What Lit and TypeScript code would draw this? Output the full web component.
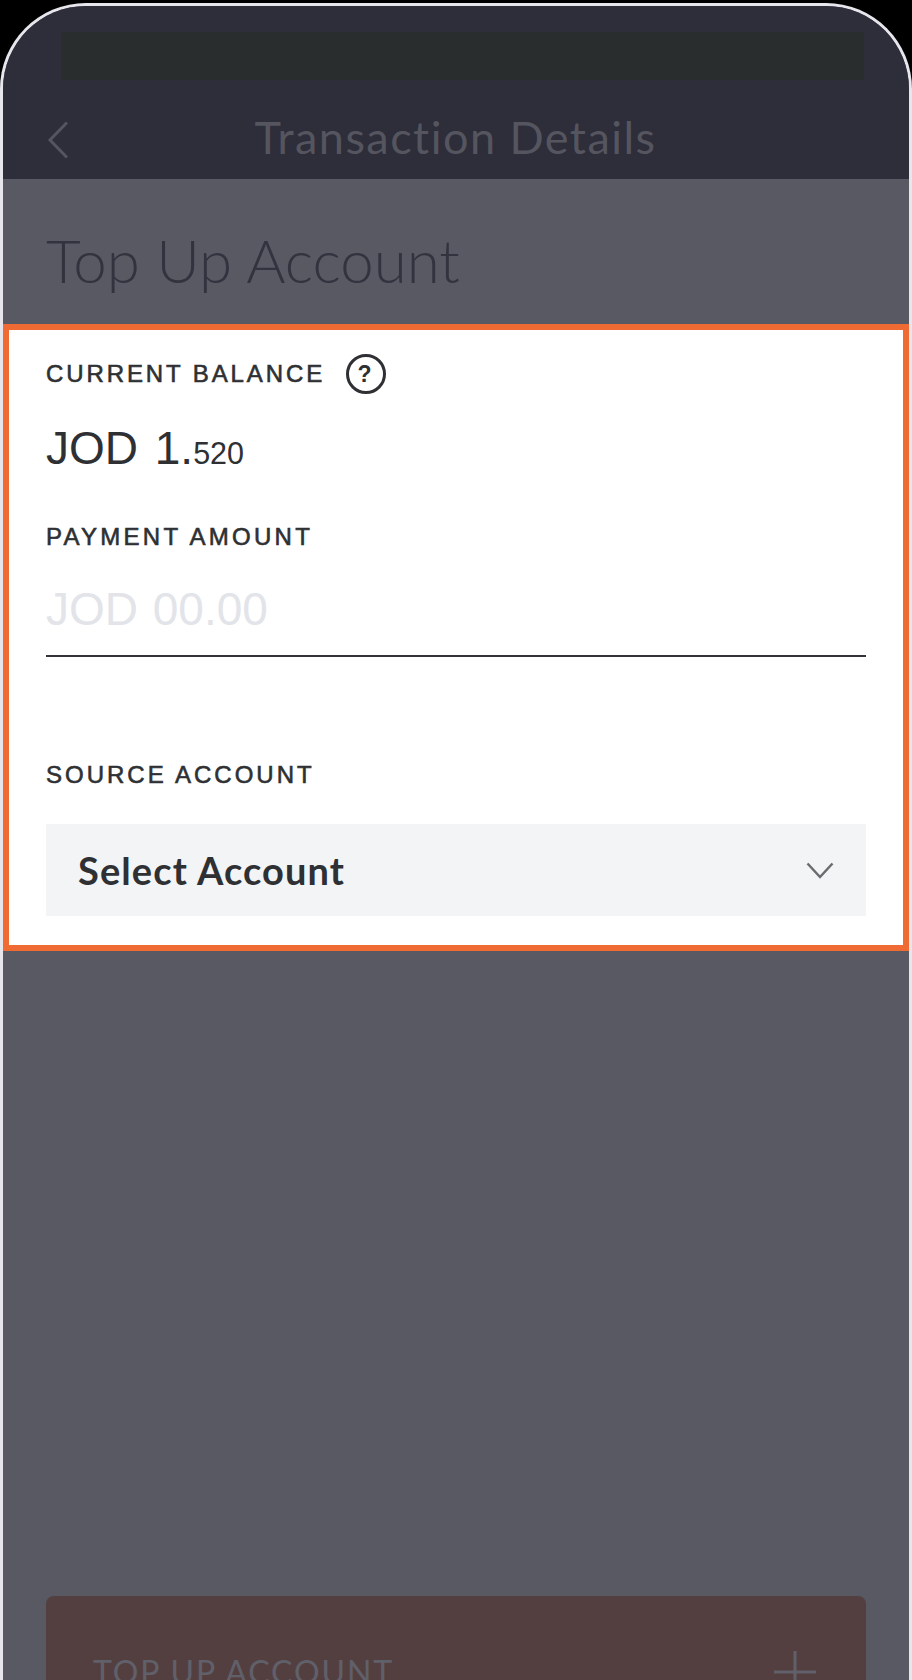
import { css, html, LitElement } from "lit";
import { customElement } from "lit/decorators.js";

@customElement("app-root")
export class AppRoot extends LitElement {
  static styles = css`
    :host {
      display: block;
      width: 912px;
      height: 1680px;
      overflow: hidden;
      background: #000;
      font-family: "Liberation Sans", Arial, sans-serif;
    }

    .phone {
      box-sizing: border-box;
      height: 1677px;
      margin-top: 3px;
      border: 3px solid #e6e6ec;
      border-bottom: 0;
      border-radius: 86px 86px 0 0;
      overflow: hidden;
      background: #595964;
    }

    .top {
      box-sizing: border-box;
      height: 173px;
      padding: 26px 45px 0 58px;
      background: #2e2d3a;
    }

    .status {
      height: 48px;
      background: #2a2d2e;
    }

    .nav {
      display: grid;
      grid-template-columns: 22px 1fr 22px;
      align-items: start;
      margin: 37px 0 0 -14px;
    }

    .nav svg {
      display: block;
      margin-top: 4px;
    }

    .nav h2 {
      margin: 0;
      text-align: center;
      font: 400 45px/40px "Lato", sans-serif;
      letter-spacing: 1.45px;
      color: #55555f;
    }

    .heading {
      margin: 0;
      height: 145px;
      box-sizing: border-box;
      padding: 45px 0 0 43px;
      font: 300 60px/72px "Lato", sans-serif;
      color: #33333f;
    }

    .panel {
      box-sizing: border-box;
      height: 627px;
      padding: 24px 37px 0 37px;
      border: 6px solid #ef6b33;
      background: #fff;
      color: #2e3033;
    }

    .label {
      display: flex;
      align-items: center;
      gap: 21px;
      height: 40px;
      font-size: 24px;
      letter-spacing: 2.9px;
      -webkit-text-stroke: 0.6px currentColor;
    }

    .label svg {
      -webkit-text-stroke: 0;
    }

    .balance {
      margin-top: 24px;
      height: 60px;
      font-size: 46px;
      line-height: 60px;
      word-spacing: 4px;
    }

    .balance small {
      font-size: 30.5px;
    }

    .amount-label {
      margin-top: 39px;
      letter-spacing: 3.27px;
    }

    .amount {
      height: 80px;
      margin-top: 18px;
      border-bottom: 2px solid #333438;
      font-size: 46px;
      line-height: 68px;
      word-spacing: 2px;
      color: #e2e4e9;
    }

    .source-label {
      margin-top: 98px;
      letter-spacing: 3px;
    }

    .select {
      display: flex;
      align-items: center;
      justify-content: space-between;
      height: 92px;
      margin-top: 29px;
      padding: 0 32px;
      background: #f3f4f6;
      font: 700 38px/44px "Lato", sans-serif;
      letter-spacing: 1.1px;
    }

    .cta {
      box-sizing: border-box;
      display: flex;
      align-items: center;
      justify-content: space-between;
      height: 160px;
      margin: 645px 43px 0;
      padding: 0 50px 8px 47px;
      border-radius: 8px;
      background: #543f40;
      color: #60606a;
      font: 400 32px/40px "Lato", sans-serif;
      letter-spacing: 1.9px;
    }
  `;

  render() {
    return html`<div class="phone">
      <div class="top">
        <div class="status"></div>
        <div class="nav">
          <svg width="22" height="38" viewBox="0 0 22 38" fill="none" stroke="#55555f" stroke-width="3">
            <path d="M20 1.5 3 19l17 17.5" />
          </svg>
          <h2>Transaction Details</h2>
          <span></span>
        </div>
      </div>
      <h1 class="heading">Top Up Account</h1>
      <section class="panel">
        <div class="label">
          CURRENT BALANCE
          <svg width="40" height="40" viewBox="0 0 40 40">
            <circle cx="20" cy="20" r="18.5" fill="none" stroke="#2e3033" stroke-width="3" />
            <text x="20" y="28" text-anchor="middle" font-size="23" font-weight="700" fill="#2e3033">?</text>
          </svg>
        </div>
        <div class="balance">JOD 1.<small>520</small></div>
        <div class="label amount-label">PAYMENT AMOUNT</div>
        <div class="amount">JOD 00.00</div>
        <div class="label source-label">SOURCE ACCOUNT</div>
        <div class="select">
          Select Account
          <svg width="28" height="17" viewBox="0 0 28 17" fill="none" stroke="#6b6c70" stroke-width="2.5">
            <path d="M1.5 1.5 14 15 26.5 1.5" />
          </svg>
        </div>
      </section>
      <div class="cta">
        TOP UP ACCOUNT
        <svg width="42" height="42" viewBox="0 0 42 42" stroke="#60606a" stroke-width="3">
          <path d="M21 0v42M0 21h42" />
        </svg>
      </div>
    </div>`;
  }
}
